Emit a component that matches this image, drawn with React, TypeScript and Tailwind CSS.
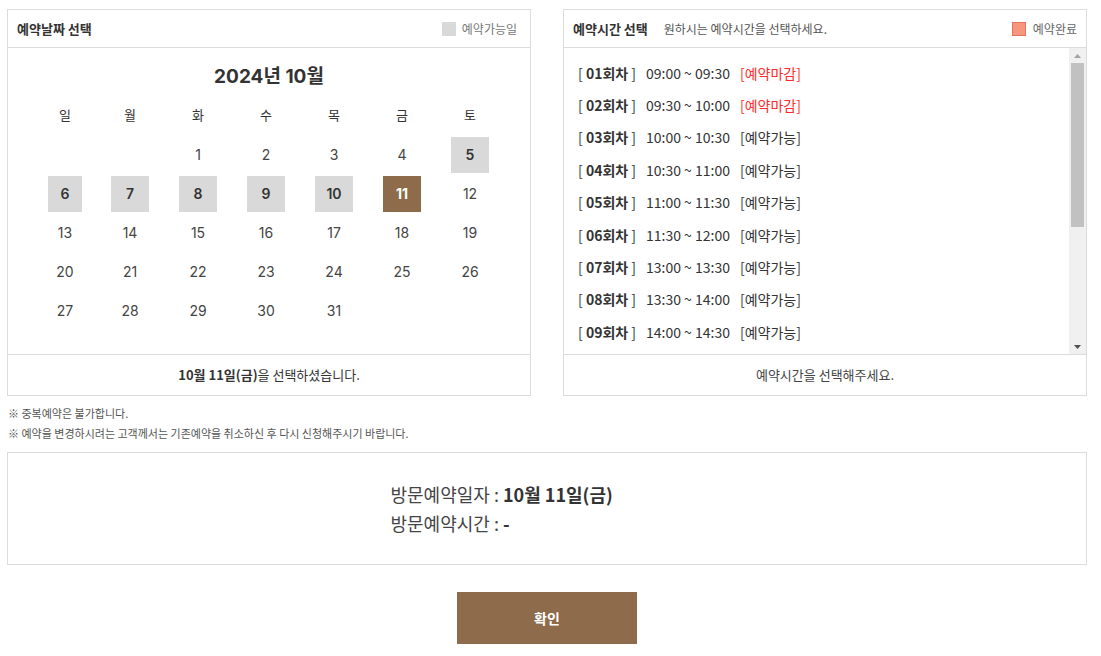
import React from 'react';

const FONT = "font-['Noto_Sans_CJK_KR','Noto_Sans',sans-serif]";
const NUM_FONT = "font-['Inter','Noto_Sans_CJK_KR',sans-serif]";

const weekdays = ['일', '월', '화', '수', '목', '금', '토'];

// October 2024 starts on Tuesday
const weeks: (number | null)[][] = [
  [null, null, 1, 2, 3, 4, 5],
  [6, 7, 8, 9, 10, 11, 12],
  [13, 14, 15, 16, 17, 18, 19],
  [20, 21, 22, 23, 24, 25, 26],
  [27, 28, 29, 30, 31, null, null],
];

const available = [5, 6, 7, 8, 9, 10];
const selected = 11;

const slots = [
  { no: '01', time: '09:00 ~ 09:30', closed: true },
  { no: '02', time: '09:30 ~ 10:00', closed: true },
  { no: '03', time: '10:00 ~ 10:30', closed: false },
  { no: '04', time: '10:30 ~ 11:00', closed: false },
  { no: '05', time: '11:00 ~ 11:30', closed: false },
  { no: '06', time: '11:30 ~ 12:00', closed: false },
  { no: '07', time: '13:00 ~ 13:30', closed: false },
  { no: '08', time: '13:30 ~ 14:00', closed: false },
  { no: '09', time: '14:00 ~ 14:30', closed: false },
];

function DayCell({ day, first }: { day: number | null; first: boolean }) {
  if (day === null) return <div className="h-[39px]" />;
  const isSel = day === selected;
  const isAvail = available.includes(day);
  const w = first ? 'w-[34px]' : 'w-[38px]';
  let box = 'text-[#444]';
  if (isSel) box = 'bg-[#8d6b4b] text-white font-bold';
  else if (isAvail) box = 'bg-[#d9d9d9] text-[#333] font-semibold';
  return (
    <div className="h-[39px] flex items-center justify-center">
      <div className={`${w} h-[36px] flex items-center justify-center text-[14px] ${box}`}>{day}</div>
    </div>
  );
}

function Calendar() {
  return (
    <div className="w-[524px] border border-[#dcdcdc] flex flex-col">
      <div className="h-[38px] border-b border-[#dcdcdc] flex items-center justify-between pl-[9px] pr-[13px]">
        <span className="text-[13px] font-bold text-[#333]">예약날짜 선택</span>
        <span className="flex items-center gap-[6px] text-[12px] text-[#777]">
          <span className="w-[14px] h-[14px] bg-[#d9d9d9]" />
          예약가능일
        </span>
      </div>
      <div className={`h-[306px] pt-[16px] ${NUM_FONT}`}>
        <div className="h-[26px] text-center text-[19px] font-bold leading-[26px] text-[#333]">2024년 10월</div>
        <div className="mt-[6px] mx-auto w-[470px] grid grid-cols-[62px_repeat(6,68px)]">
          {weekdays.map((d) => (
            <div key={d} className="h-[39px] flex items-center justify-center text-[13px] text-[#333]">
              {d}
            </div>
          ))}
          {weeks.map((week, wi) =>
            week.map((day, di) => <DayCell key={`${wi}-${di}`} day={day} first={di === 0} />)
          )}
        </div>
      </div>
      <div className="h-[41px] border-t border-[#dcdcdc] flex items-center justify-center text-[13px] text-[#333]">
        <b className="font-bold">10월 11일(금)</b>을 선택하셨습니다.
      </div>
    </div>
  );
}

function TimeList() {
  return (
    <div className="w-[524px] border border-[#dcdcdc] flex flex-col">
      <div className="h-[38px] border-b border-[#dcdcdc] flex items-center pl-[9px] pr-[9px]">
        <span className="text-[13px] font-bold text-[#333]">예약시간 선택</span>
        <span className="ml-[16px] text-[12px] text-[#555]">원하시는 예약시간을 선택하세요.</span>
        <span className="ml-auto flex items-center gap-[7px] text-[12px] text-[#666]">
          <span className="w-[14px] h-[14px] bg-[#f6977d] border border-[#e8735c]" />
          예약완료
        </span>
      </div>
      <div className="h-[306px] flex">
        <div className="flex-1 overflow-hidden pt-[9px] pl-[14px]">
          {slots.map((s) => (
            <div key={s.no} className="h-[32.4px] flex items-center text-[14px] text-[#333] whitespace-nowrap">
              <span className="w-[68px]">
                [ <b className="font-bold">{s.no}회차</b> ]
              </span>
              <span className="w-[94px]">{s.time}</span>
              <span className={s.closed ? 'text-[#ff2a2a]' : 'text-[#333]'}>
                [{s.closed ? '예약마감' : '예약가능'}]
              </span>
            </div>
          ))}
        </div>
        <div className="w-[17px] bg-[#f0f0f0] flex flex-col items-center">
          <div className="h-[15px] flex items-center justify-center">
            <svg width="7" height="4" viewBox="0 0 7 4"><path d="M3.5 0L7 4H0z" fill="#a3a3a3" /></svg>
          </div>
          <div className="w-[13px] h-[164px] bg-[#c1c1c1]" />
          <div className="flex-1" />
          <div className="h-[15px] flex items-center justify-center">
            <svg width="7" height="4" viewBox="0 0 7 4"><path d="M0 0H7L3.5 4z" fill="#505050" /></svg>
          </div>
        </div>
      </div>
      <div className="h-[41px] border-t border-[#dcdcdc] flex items-center justify-center text-[13px] text-[#444]">
        예약시간을 선택해주세요.
      </div>
    </div>
  );
}

export default function App() {
  return (
    <div className={`w-[1101px] h-[656px] bg-white pl-[7px] pt-[9px] ${FONT}`}>
      <div className="w-[1080px] flex justify-between">
        <Calendar />
        <TimeList />
      </div>

      <div className="mt-[7px] pl-[1px] text-[11px] leading-[20px] text-[#555]">
        <p>※ 중복예약은 불가합니다.</p>
        <p>※ 예약을 변경하시려는 고객께서는 기존예약을 취소하신 후 다시 신청해주시기 바랍니다.</p>
      </div>

      <div className="mt-[9px] w-[1080px] h-[113px] border border-[#dcdcdc] flex items-center">
        <div className="w-[313px] mx-auto text-[18px] leading-[29px] text-[#444]">
          <p>
            방문예약일자 : <b className="font-bold text-[#333]">10월 11일(금)</b>
          </p>
          <p>
            방문예약시간 : <b className="font-bold text-[#333]">-</b>
          </p>
        </div>
      </div>

      <div className="w-[1080px] flex justify-center mt-[27px]">
        <button className="w-[180px] h-[52px] bg-[#8d6b4b] text-white text-[14px] font-bold">확인</button>
      </div>
    </div>
  );
}
